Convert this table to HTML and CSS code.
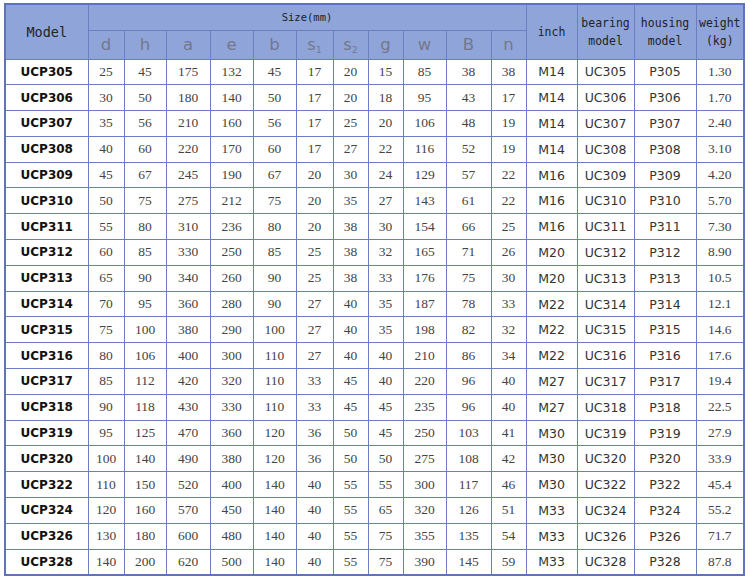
FILE: index.html
```html
<!DOCTYPE html>
<html>
<head>
<meta charset="utf-8">
<link rel="stylesheet" href="styles.css">
</head>
<body>
<table class="spec">
<colgroup>
<col class="c-model"><col class="c-d"><col class="c-h"><col class="c-a"><col class="c-e"><col class="c-b"><col class="c-s1"><col class="c-s2"><col class="c-g"><col class="c-w"><col class="c-B"><col class="c-n"><col class="c-inch"><col class="c-bear"><col class="c-hous"><col class="c-wt">
</colgroup>
<thead>
<tr class="h1">
<th rowspan="2" class="mono model-h">Model</th>
<th colspan="11" class="mono size-h">Size(mm)</th>
<th rowspan="2" class="mono small-h">inch</th>
<th rowspan="2" class="mono small-h">bearing<br>model</th>
<th rowspan="2" class="mono small-h">housing<br>model</th>
<th rowspan="2" class="mono small-h">weight<br>(kg)</th>
</tr>
<tr class="h2">
<th class="let">d</th><th class="let">h</th><th class="let">a</th><th class="let">e</th><th class="let">b</th><th class="let">s<sub>1</sub></th><th class="let">s<sub>2</sub></th><th class="let">g</th><th class="let">w</th><th class="let">B</th><th class="let">n</th>
</tr>
</thead>
<tbody>
<tr><td class="m">UCP305</td><td>25</td><td>45</td><td>175</td><td>132</td><td>45</td><td>17</td><td>20</td><td>15</td><td>85</td><td>38</td><td>38</td><td class="s">M14</td><td class="s">UC305</td><td class="s">P305</td><td>1.30</td></tr>
<tr><td class="m">UCP306</td><td>30</td><td>50</td><td>180</td><td>140</td><td>50</td><td>17</td><td>20</td><td>18</td><td>95</td><td>43</td><td>17</td><td class="s">M14</td><td class="s">UC306</td><td class="s">P306</td><td>1.70</td></tr>
<tr><td class="m">UCP307</td><td>35</td><td>56</td><td>210</td><td>160</td><td>56</td><td>17</td><td>25</td><td>20</td><td>106</td><td>48</td><td>19</td><td class="s">M14</td><td class="s">UC307</td><td class="s">P307</td><td>2.40</td></tr>
<tr><td class="m">UCP308</td><td>40</td><td>60</td><td>220</td><td>170</td><td>60</td><td>17</td><td>27</td><td>22</td><td>116</td><td>52</td><td>19</td><td class="s">M14</td><td class="s">UC308</td><td class="s">P308</td><td>3.10</td></tr>
<tr><td class="m">UCP309</td><td>45</td><td>67</td><td>245</td><td>190</td><td>67</td><td>20</td><td>30</td><td>24</td><td>129</td><td>57</td><td>22</td><td class="s">M16</td><td class="s">UC309</td><td class="s">P309</td><td>4.20</td></tr>
<tr><td class="m">UCP310</td><td>50</td><td>75</td><td>275</td><td>212</td><td>75</td><td>20</td><td>35</td><td>27</td><td>143</td><td>61</td><td>22</td><td class="s">M16</td><td class="s">UC310</td><td class="s">P310</td><td>5.70</td></tr>
<tr><td class="m">UCP311</td><td>55</td><td>80</td><td>310</td><td>236</td><td>80</td><td>20</td><td>38</td><td>30</td><td>154</td><td>66</td><td>25</td><td class="s">M16</td><td class="s">UC311</td><td class="s">P311</td><td>7.30</td></tr>
<tr><td class="m">UCP312</td><td>60</td><td>85</td><td>330</td><td>250</td><td>85</td><td>25</td><td>38</td><td>32</td><td>165</td><td>71</td><td>26</td><td class="s">M20</td><td class="s">UC312</td><td class="s">P312</td><td>8.90</td></tr>
<tr><td class="m">UCP313</td><td>65</td><td>90</td><td>340</td><td>260</td><td>90</td><td>25</td><td>38</td><td>33</td><td>176</td><td>75</td><td>30</td><td class="s">M20</td><td class="s">UC313</td><td class="s">P313</td><td>10.5</td></tr>
<tr><td class="m">UCP314</td><td>70</td><td>95</td><td>360</td><td>280</td><td>90</td><td>27</td><td>40</td><td>35</td><td>187</td><td>78</td><td>33</td><td class="s">M22</td><td class="s">UC314</td><td class="s">P314</td><td>12.1</td></tr>
<tr><td class="m">UCP315</td><td>75</td><td>100</td><td>380</td><td>290</td><td>100</td><td>27</td><td>40</td><td>35</td><td>198</td><td>82</td><td>32</td><td class="s">M22</td><td class="s">UC315</td><td class="s">P315</td><td>14.6</td></tr>
<tr><td class="m">UCP316</td><td>80</td><td>106</td><td>400</td><td>300</td><td>110</td><td>27</td><td>40</td><td>40</td><td>210</td><td>86</td><td>34</td><td class="s">M22</td><td class="s">UC316</td><td class="s">P316</td><td>17.6</td></tr>
<tr><td class="m">UCP317</td><td>85</td><td>112</td><td>420</td><td>320</td><td>110</td><td>33</td><td>45</td><td>40</td><td>220</td><td>96</td><td>40</td><td class="s">M27</td><td class="s">UC317</td><td class="s">P317</td><td>19.4</td></tr>
<tr><td class="m">UCP318</td><td>90</td><td>118</td><td>430</td><td>330</td><td>110</td><td>33</td><td>45</td><td>45</td><td>235</td><td>96</td><td>40</td><td class="s">M27</td><td class="s">UC318</td><td class="s">P318</td><td>22.5</td></tr>
<tr><td class="m">UCP319</td><td>95</td><td>125</td><td>470</td><td>360</td><td>120</td><td>36</td><td>50</td><td>45</td><td>250</td><td>103</td><td>41</td><td class="s">M30</td><td class="s">UC319</td><td class="s">P319</td><td>27.9</td></tr>
<tr><td class="m">UCP320</td><td>100</td><td>140</td><td>490</td><td>380</td><td>120</td><td>36</td><td>50</td><td>50</td><td>275</td><td>108</td><td>42</td><td class="s">M30</td><td class="s">UC320</td><td class="s">P320</td><td>33.9</td></tr>
<tr><td class="m">UCP322</td><td>110</td><td>150</td><td>520</td><td>400</td><td>140</td><td>40</td><td>55</td><td>55</td><td>300</td><td>117</td><td>46</td><td class="s">M30</td><td class="s">UC322</td><td class="s">P322</td><td>45.4</td></tr>
<tr><td class="m">UCP324</td><td>120</td><td>160</td><td>570</td><td>450</td><td>140</td><td>40</td><td>55</td><td>65</td><td>320</td><td>126</td><td>51</td><td class="s">M33</td><td class="s">UC324</td><td class="s">P324</td><td>55.2</td></tr>
<tr><td class="m">UCP326</td><td>130</td><td>180</td><td>600</td><td>480</td><td>140</td><td>40</td><td>55</td><td>75</td><td>355</td><td>135</td><td>54</td><td class="s">M33</td><td class="s">UC326</td><td class="s">P326</td><td>71.7</td></tr>
<tr><td class="m">UCP328</td><td>140</td><td>200</td><td>620</td><td>500</td><td>140</td><td>40</td><td>55</td><td>75</td><td>390</td><td>145</td><td>59</td><td class="s">M33</td><td class="s">UC328</td><td class="s">P328</td><td>87.8</td></tr>
</tbody>
</table>
</body>
</html>
```
FILE: styles.css
```css
html, body {
  margin: 0;
  padding: 0;
  background: #ffffff;
}
body {
  padding: 3px 0 0 4px;
}
.spec {
  border-collapse: collapse;
  table-layout: fixed;
  width: 739px;
  border: 2px solid #5f73b8;
  font-family: "Liberation Serif", serif;
  color: #444;
}
.c-model { width: 83px; }
.c-d { width: 36px; }
.c-h { width: 42px; }
.c-a { width: 44px; }
.c-e { width: 43px; }
.c-b { width: 43px; }
.c-s1 { width: 37px; }
.c-s2 { width: 35px; }
.c-g { width: 35px; }
.c-w { width: 43px; }
.c-B { width: 45px; }
.c-n { width: 35px; }
.c-inch { width: 51px; }
.c-bear { width: 57px; }
.c-hous { width: 62px; }
.c-wt { width: 48px; }

.spec th, .spec td {
  border: 1px solid #6a7fc2;
  padding: 0;
  text-align: center;
  overflow: hidden;
  white-space: nowrap;
}
.spec th {
  background: #8fa5da;
  font-weight: normal;
}
.h1 { height: 26px; }
.h2 { height: 29px; }
.mono {
  font-family: "DejaVu Sans Mono", "Liberation Mono", monospace;
  color: #222;
}
.model-h {
  font-size: 13.5px;
  padding-bottom: 2px;
}
.size-h {
  font-size: 10.5px;
  font-weight: bold;
  vertical-align: middle;
}
.small-h {
  font-size: 11.5px;
  line-height: 18px;
}
.let {
  font-family: "DejaVu Sans", sans-serif;
  font-size: 16.5px;
  color: #74778a;
}
.let sub {
  font-size: 9px;
  vertical-align: -3px;
}
.spec tbody tr { height: 25.8px; }
.spec td {
  font-size: 13.5px;
  background: #ffffff;
}
.spec td.m {
  font-family: "DejaVu Sans", sans-serif;
  font-weight: bold;
  font-size: 12px;
  color: #111;
}
.spec td.s {
  font-family: "DejaVu Sans", sans-serif;
  font-size: 12.5px;
  color: #333;
}
```
